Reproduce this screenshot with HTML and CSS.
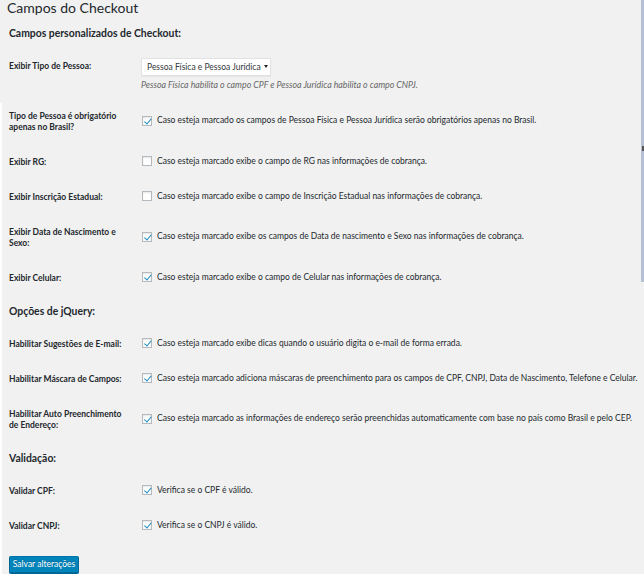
FILE: index.html
```html
<!DOCTYPE html>
<html lang="pt-BR">
<head>
    <meta charset="UTF-8">
    <title>Campos do Checkout</title>
    <link rel="stylesheet" href="styles.css">
</head>
<body>
    <div class="edgeLeft"></div>
    <div class="edgeRight"><span></span></div>
    <div class="wrap">
        <h1>Campos do Checkout</h1>
        <form action="#" method="post">
            <h2>Campos personalizados de Checkout:</h2>
            <table class="formTable">
                <tr>
                    <th>Exibir Tipo de Pessoa:</th>
                    <td>
                        <span class="selectBox">
                            <select>
                                <option>Pessoa Física e Pessoa Jurídica</option>
                                <option>Pessoa Física apenas</option>
                                <option>Pessoa Jurídica apenas</option>
                            </select>
                        </span>
                        <p class="description">Pessoa Física habilita o campo CPF e Pessoa Jurídica habilita o campo CNPJ.</p>
                    </td>
                </tr>
                <tr>
                    <th>Tipo de Pessoa é obrigatório apenas no Brasil?</th>
                    <td><label class="check"><input type="checkbox" checked> Caso esteja marcado os campos de Pessoa Física e Pessoa Jurídica serão obrigatórios apenas no Brasil.</label></td>
                </tr>
                <tr>
                    <th>Exibir RG:</th>
                    <td><label class="check"><input type="checkbox"> Caso esteja marcado exibe o campo de RG nas informações de cobrança.</label></td>
                </tr>
                <tr>
                    <th>Exibir Inscrição Estadual:</th>
                    <td><label class="check"><input type="checkbox"> Caso esteja marcado exibe o campo de Inscrição Estadual nas informações de cobrança.</label></td>
                </tr>
                <tr>
                    <th>Exibir Data de Nascimento e Sexo:</th>
                    <td><label class="check"><input type="checkbox" checked> Caso esteja marcado exibe os campos de Data de nascimento e Sexo nas informações de cobrança.</label></td>
                </tr>
                <tr>
                    <th>Exibir Celular:</th>
                    <td><label class="check"><input type="checkbox" checked> Caso esteja marcado exibe o campo de Celular nas informações de cobrança.</label></td>
                </tr>
            </table>

            <h2>Opções de jQuery:</h2>
            <table class="formTable">
                <tr>
                    <th>Habilitar Sugestões de E-mail:</th>
                    <td><label class="check"><input type="checkbox" checked> Caso esteja marcado exibe dicas quando o usuário digita o e-mail de forma errada.</label></td>
                </tr>
                <tr>
                    <th>Habilitar Máscara de Campos:</th>
                    <td><label class="check"><input type="checkbox" checked> Caso esteja marcado adiciona máscaras de preenchimento para os campos de CPF, CNPJ, Data de Nascimento, Telefone e Celular.</label></td>
                </tr>
                <tr>
                    <th>Habilitar Auto Preenchimento de Endereço:</th>
                    <td><label class="check"><input type="checkbox" checked> Caso esteja marcado as informações de endereço serão preenchidas automaticamente com base no país como Brasil e pelo CEP.</label></td>
                </tr>
            </table>

            <h2>Validação:</h2>
            <table class="formTable">
                <tr>
                    <th>Validar CPF:</th>
                    <td><label class="check"><input type="checkbox" checked> Verifica se o CPF é válido.</label></td>
                </tr>
                <tr>
                    <th>Validar CNPJ:</th>
                    <td><label class="check"><input type="checkbox" checked> Verifica se o CNPJ é válido.</label></td>
                </tr>
            </table>

            <p class="submit"><input type="submit" class="buttonPrimary" value="Salvar alterações"></p>
        </form>
    </div>
</body>
</html>
```

FILE: styles.css
```css
body,h1,h2,p,table,th,td,form{margin: 0; padding: 0;}
body{background-color: #f1f1f1; color: #23282d; font-family: Lato, "Segoe UI", sans-serif; font-size: 8.5px; line-height: 11px; width: 644px; height: 574px; overflow: hidden;}
.edgeLeft{position: absolute; left: 0; top: 103px; width: 2px; height: 471px; background-color: #fff;}
.edgeRight{position: absolute; right: 0; top: 0; width: 3px; height: 282px; background-color: #b5c0d5;}
.edgeRight span{position: absolute; left: 1px; top: 146px; width: 2px; height: 5px; background-color: #555;}
.wrap{padding-left: 9px;}
.wrap h1{font-size: 14px; line-height: 16px; font-weight: normal; margin: 0 0 0 -2px; padding-bottom: 2px;}
.wrap h2{font-size: 10.4px; line-height: 15px; font-weight: 700; margin: 8px 0;}
.formTable{border-collapse: collapse; border-spacing: 0;}
.formTable th{width: 122px; padding: 12px 10px 12px 0; text-align: left; vertical-align: top; font-weight: 700;}
.formTable td{padding: 9px 0; vertical-align: middle; white-space: nowrap;}
.selectBox{display: inline-block; position: relative; vertical-align: top;}
.selectBox select{-webkit-appearance: none; appearance: none; display: block; width: 130px; height: 18px; margin: 0; padding: 0 6px 0 5px; border: 1px solid #e2e2e2; border-radius: 0; background-color: #fff; color: #32373c; font-family: inherit; font-size: 8.5px; line-height: 16px; box-shadow: 0 1px 1px rgba(0,0,0,0.04);}
.selectBox:after{content: ""; position: absolute; left: 123px; top: 7px; border-left: 2px solid transparent; border-right: 2px solid transparent; border-top: 3px solid #222;}
.description{margin-top: 3px; font-size: 8.8px; font-style: italic; color: #666;}
.check{display: inline-flex; align-items: center; gap: 5px;}
.check input{-webkit-appearance: none; appearance: none; position: relative; flex: none; width: 10px; height: 10px; margin: 0 0 0 1px; border: 1px solid #b4b9be; border-radius: 0; background-color: #fff; box-shadow: inset 0 1px 2px rgba(0,0,0,0.1);}
.check input:checked:before{content: ""; position: absolute; left: 2.5px; top: 0; width: 2.5px; height: 5.5px; border-right: 1.7px solid #1e8cbe; border-bottom: 1.7px solid #1e8cbe; transform: rotate(40deg);}
.submit{margin-top: 12px;}
.buttonPrimary{display: block; width: 70px; height: 17px; margin: 0; padding: 0; border: 1px solid #0073aa; border-color: #0073aa #006799 #006799; border-radius: 2px; background-color: #0085ba; box-shadow: 0 1px 0 #006799; color: #fff; font-family: inherit; font-size: 8.5px; line-height: 15px; text-align: center; text-shadow: 0 -1px 1px #006799; cursor: pointer;}
```
